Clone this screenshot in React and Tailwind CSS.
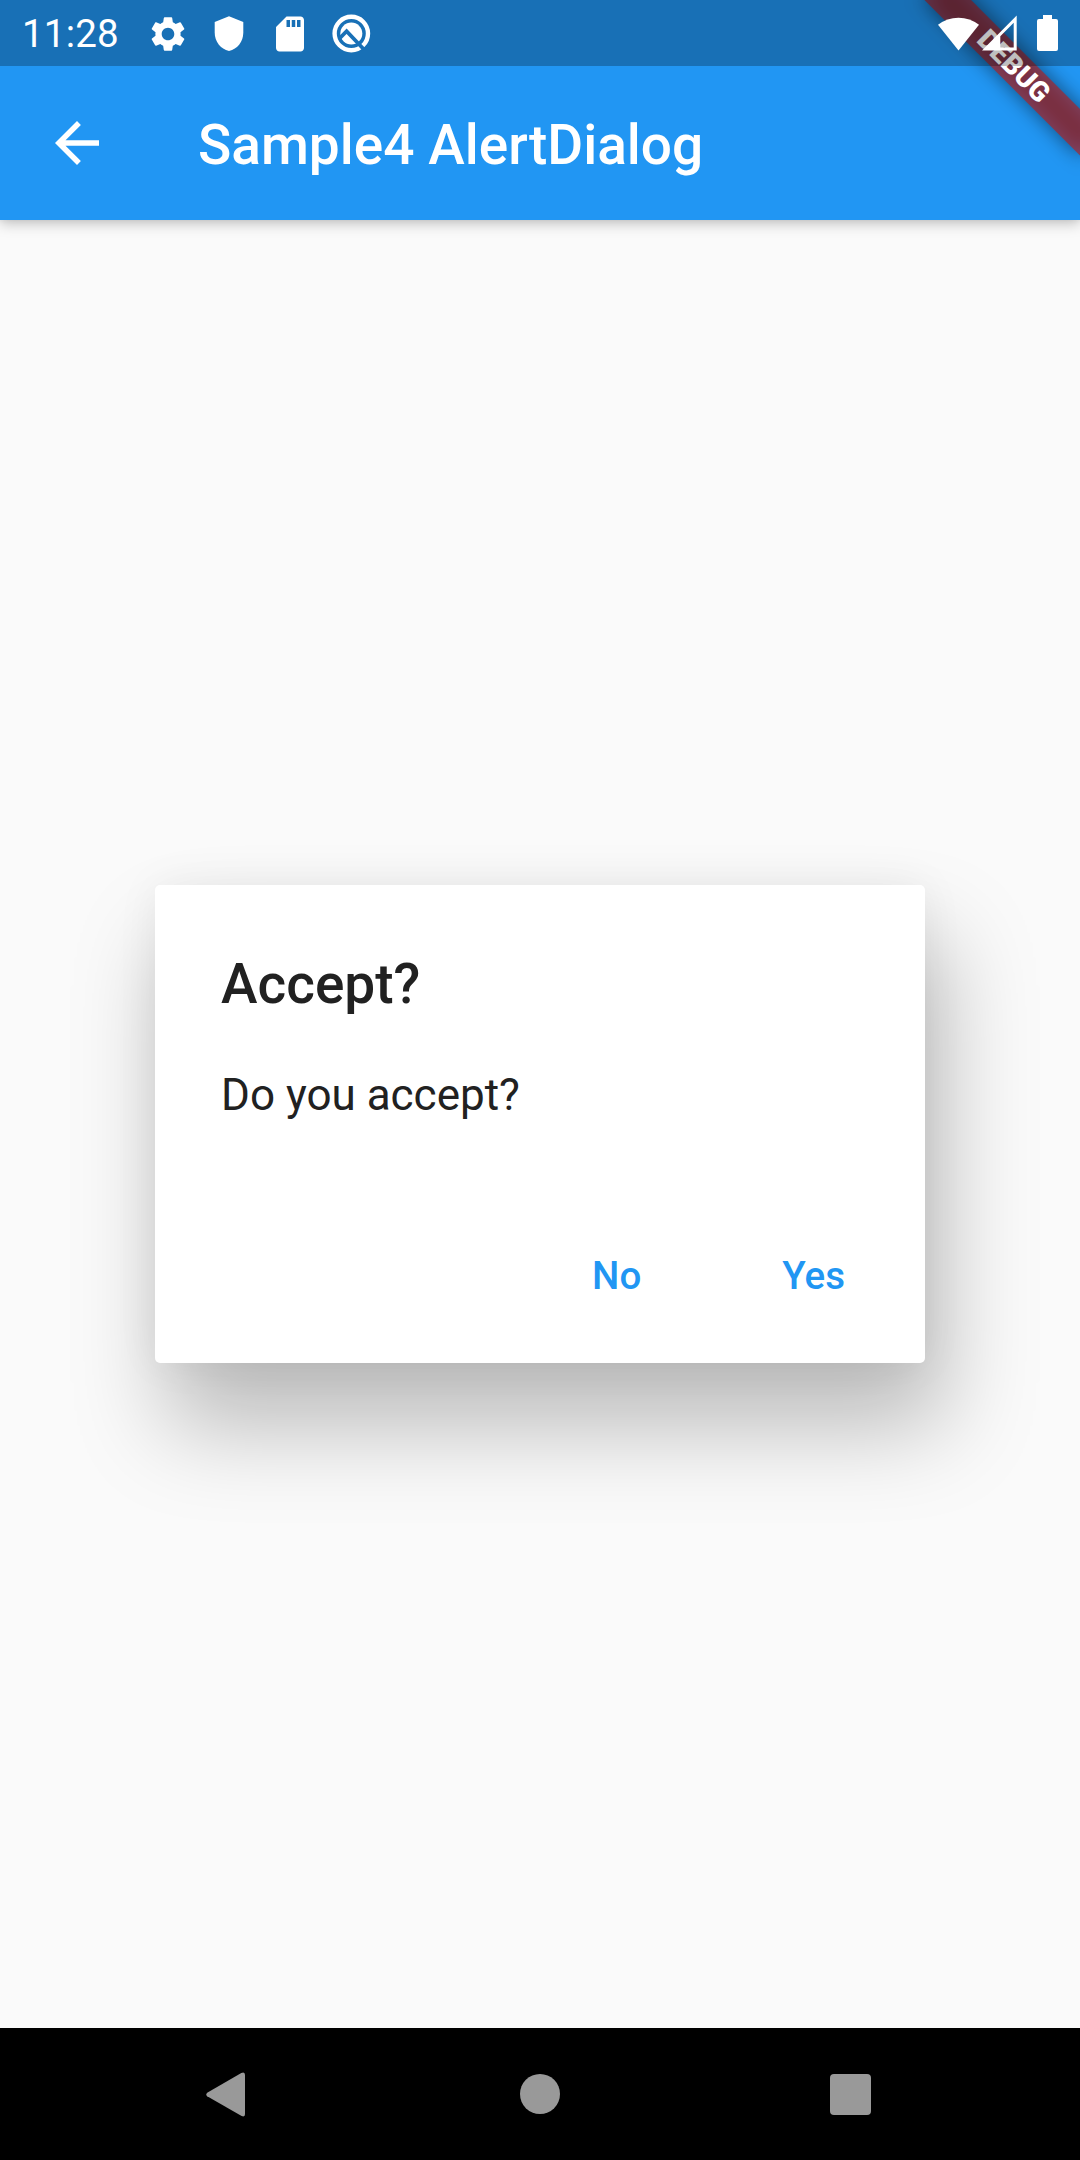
import { MdArrowBack, MdSettings, MdSdCard } from "react-icons/md";

function StatusBar() {
  return (
    <div className="absolute inset-x-0 top-0 flex h-[66px] items-center bg-black/25 pl-[22px] pr-[22px] text-white">
      <span className="w-[96px] pt-[2px] text-[38.5px] leading-[66px] tracking-[0.2px]">11:28</span>
      <div className="ml-[29px] flex items-center pt-[1px]">
        <MdSettings className="size-[42px]" />
        <svg className="ml-[19px] size-[42px]" viewBox="0 0 42 42" fill="currentColor">
          <path d="M21 3.3 35.3 8.9V19.5C35.3 28.5 29.5 36 21 38 12.5 36 6.7 28.5 6.7 19.5V8.9Z" />
        </svg>
        <MdSdCard className="ml-[19px] size-[42px]" />
        <svg className="ml-[19px] size-[42px]" viewBox="0 0 42 42" fill="none">
          <circle cx="21.3" cy="20.5" r="16.7" stroke="currentColor" strokeWidth="4.4" />
          <circle cx="21.3" cy="20.5" r="11" fill="currentColor" />
          <path d="M9.5 25.5 16.6 18.2 34 36.5" stroke="#1970b6" strokeWidth="3.8" />
        </svg>
      </div>
      <div className="ml-auto flex items-center">
        <svg className="h-[36px] w-[41px]" viewBox="0 0 41 36" fill="currentColor">
          <path d="M20.5 35.5 0 9.8A33 33 0 0 1 41 9.8Z" />
        </svg>
        <svg className="ml-[3px] h-[36px] w-[36px]" viewBox="0 0 36 36" fill="currentColor">
          <path fillRule="evenodd" d="M0 35.5 34.7.5V35.5ZM18.3 32.5H31.7V7.8L18.3 21.3Z" />
        </svg>
        <svg className="ml-[19px] h-[36px] w-[21px]" viewBox="0 0 21 36" fill="currentColor">
          <path d="M6 0h9v4h4a2 2 0 0 1 2 2v28a2 2 0 0 1-2 2H2a2 2 0 0 1-2-2V6a2 2 0 0 1 2-2h4Z" />
        </svg>
      </div>
    </div>
  );
}

function DebugBanner() {
  return (
    <div className="absolute right-0 top-0 size-0 rotate-45">
      <div className="absolute left-[-110px] top-[77px] h-[33px] w-[220px] bg-black/50 blur-[10px]" />
      <div className="absolute left-[-110px] top-[77px] flex h-[33px] w-[220px] items-center justify-center bg-[#b71c1c]/63 text-[28px] leading-none font-black text-white">
        DEBUG
      </div>
    </div>
  );
}

function AppBar() {
  return (
    <header className="relative flex h-[220px] items-center bg-[#2196f3] pl-[44px] pt-[66px] text-white shadow-[0_3px_13px_rgba(0,0,0,0.25),0_0_5px_rgba(0,0,0,0.05)]">
      <MdArrowBack className="size-[66px]" />
      <h1 className="ml-[88px] pt-[3px] text-[55px] leading-[64px] font-medium">Sample4 AlertDialog</h1>
    </header>
  );
}

function AlertDialog() {
  return (
    <section className="mt-[665px] h-[478px] w-[770px] rounded-[5px] bg-white px-[66px] pt-[66px] text-[#212121] shadow-[15px_60px_92px_4px_rgba(0,0,0,0.25),0_0_44px_rgba(0,0,0,0.06)]">
      <h2 className="text-[55px] leading-[66px] font-medium">Accept?</h2>
      <p className="mt-[52px] text-[44px] leading-[52px]">Do you accept?</p>
      <div className="mt-[122px] flex justify-end gap-[141px] pr-[14px] text-[38.5px] leading-[66px] font-medium text-[#2196f3]">
        <button>No</button>
        <button>Yes</button>
      </div>
    </section>
  );
}

function NavigationBar() {
  return (
    <nav className="flex h-[132px] items-center bg-black text-[#999999]">
      <svg className="ml-[206px] h-[45px] w-[40px]" viewBox="0 0 41 46" fill="currentColor">
        <path d="M1.2 21.2 36.2.9Q40 -.8 40 3V43Q40 46.5 36.5 45L1.2 24.8Q-.6 23 1.2 21.2Z" />
      </svg>
      <div className="ml-[274px] size-[40px] rounded-full bg-[#999999]" />
      <div className="ml-[270px] mt-[1px] size-[41px] rounded-[4px] bg-[#999999]" />
    </nav>
  );
}

export default function App() {
  return (
    <div className="relative flex h-[2160px] w-[1080px] flex-col overflow-hidden bg-[#fafafa] font-['Roboto',sans-serif]">
      <AppBar />
      <main className="flex flex-1 flex-col items-center">
        <AlertDialog />
      </main>
      <NavigationBar />
      <DebugBanner />
      <StatusBar />
    </div>
  );
}
